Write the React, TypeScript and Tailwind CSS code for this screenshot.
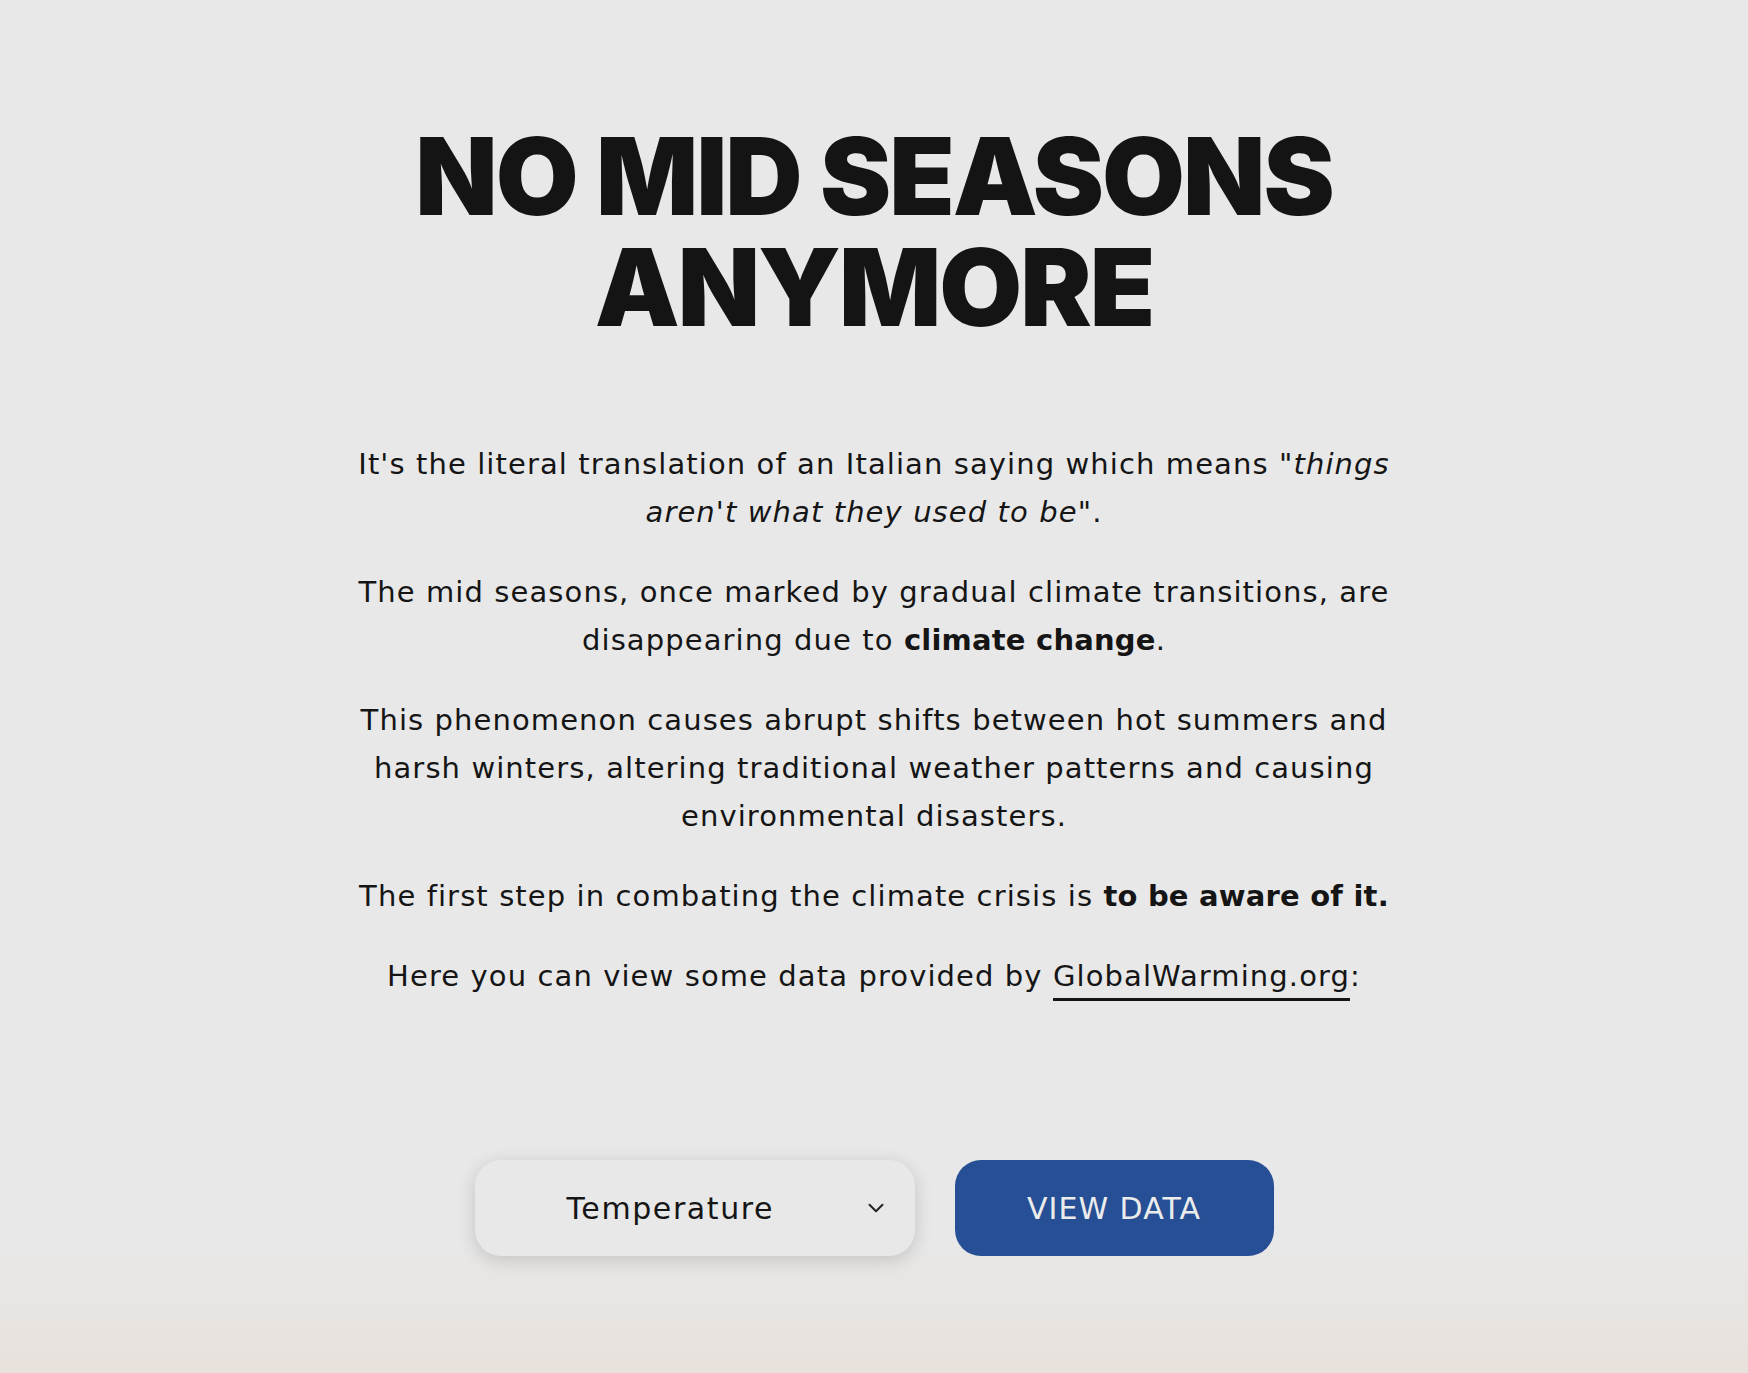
import { ChevronDown } from 'lucide-react'

const body = { fontFamily: '"DejaVu Sans", "Open Sans", Arial, sans-serif' }
const heading = { fontFamily: 'Inter, "Noto Sans", Arial, sans-serif' }

export default function App() {
  return (
    <div
      className="min-h-screen w-full bg-[linear-gradient(180deg,#e8e8e8_0%,#e8e8e8_90%,#e8e1dc_100%)] text-[#151515]"
      style={body}
    >
      <main className="flex flex-col items-center pt-[121px] pb-[118px]">
        {/* titre */}
        <h1
          className="text-center text-[107px] font-black uppercase leading-[111px] tracking-[-2px] text-[#141414]"
          style={heading}
        >
          No mid seasons
          <br />
          anymore
        </h1>

        {/* texte, coupures de ligne comme la maquette */}
        <div className="mt-[97px] flex max-w-[1200px] flex-col gap-[32px] text-center text-[29px] leading-[48px] tracking-[1.1px]">
          <p>
            It's the literal translation of an Italian saying which means <em>"things</em>
            <br />
            <em>aren't what they used to be"</em>.
          </p>
          <p>
            The mid seasons, once marked by gradual climate transitions, are
            <br />
            disappearing due to <strong className="font-bold tracking-[0.2px]">climate change</strong>.
          </p>
          <p>
            This phenomenon causes abrupt shifts between hot summers and
            <br />
            harsh winters, altering traditional weather patterns and causing
            <br />
            environmental disasters.
          </p>
          <p>
            The first step in combating the climate crisis is{' '}
            <strong className="font-bold tracking-[0.2px]">to be aware of it.</strong>
          </p>
          <p>
            Here you can view some data provided by{' '}
            <a href="#" className="border-b-[3px] border-[#151515] pb-[5px]">
              GlobalWarming.org
            </a>
            :
          </p>
        </div>

        {/* actions */}
        <div className="mt-[160px] flex items-center gap-[40px]">
          <div className="flex h-[96px] w-[440px] items-center justify-between rounded-[26px] bg-[#e8e8e8] pl-[92px] pr-[26px] shadow-[0_4px_18px_rgba(0,0,0,0.16)]">
            <span className="text-[30px] tracking-[1.6px]">Temperature</span>
            <ChevronDown className="h-[26px] w-[26px] text-[#222]" strokeWidth={1.8} />
          </div>
          <button
            type="button"
            className="flex h-[96px] w-[319px] items-center justify-center rounded-[26px] bg-[#274f95] text-[30px] tracking-[1px] text-[#ececec]"
          >
            VIEW DATA
          </button>
        </div>
      </main>
    </div>
  )
}
